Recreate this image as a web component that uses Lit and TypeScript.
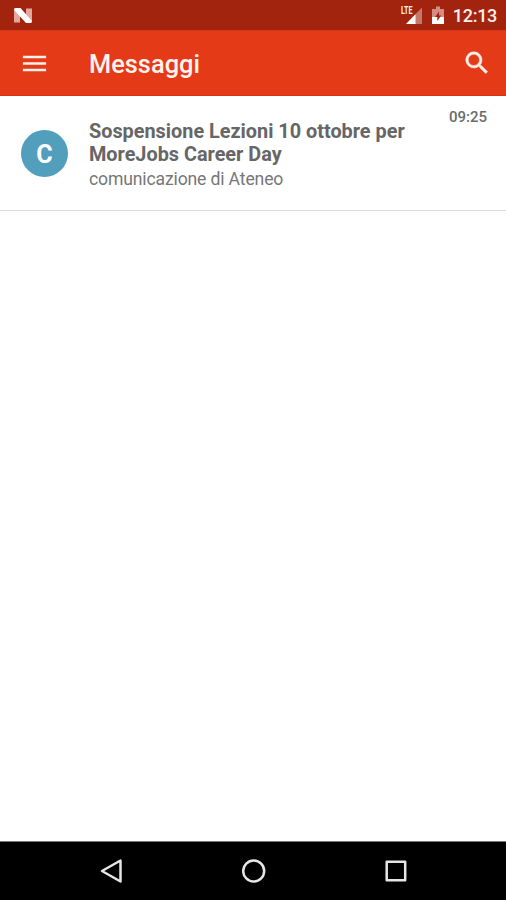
import { LitElement, html, css } from "lit";
import { customElement, property } from "lit/decorators.js";

@customElement("status-bar")
class StatusBar extends LitElement {
  static styles = css`
    :host {
      display: flex;
      align-items: center;
      height: 30px;
      padding: 0 9px 0 13px;
      box-sizing: border-box;
      background: #a2240e;
      color: #fff0ec;
    }
    .n { width: 20px; height: 17px; margin-top: 1px; }
    .gap { flex: 1; }
    .signal { width: 23px; height: 20px; margin-right: 9px; }
    .battery { width: 12px; height: 19px; margin: 1px 9px 0 0; }
    .clock { font-size: 18px; font-weight: 500; line-height: 30px; padding-top: 2px; letter-spacing: -0.3px; }
    .lte { font: 700 10px Roboto, sans-serif; fill: #fff0ec; }
  `;
  render() {
    return html`
      <svg class="n" viewBox="0 0 20 17">
        <path d="M1 1.500h6v14H1zM13 1.500h6v14h-6z" fill="#e3a79d" />
        <path d="M2 1h5.500L19 14l-1 2h-5L1 3z" fill="#fff" />
      </svg>
      <span class="gap"></span>
      <svg class="signal" viewBox="0 0 23 20">
        <path d="M22 2.500v16.500H6z" fill="#c5776a" />
        <path d="M15.500 9.200V19H6z" fill="#fff" />
        <text class="lte" x="1" y="9" textLength="11.500" lengthAdjust="spacingAndGlyphs">LTE</text>
      </svg>
      <svg class="battery" viewBox="0 0 12 19">
        <path d="M4 .5h4V3h4v8H0V3h4z" fill="#d28e83" />
        <path d="M0 11h12v7H0z" fill="#fff" />
        <path d="M7 5.500v4h2.200L5.300 15v-4H3z" fill="#a2240e" />
      </svg>
      <span class="clock">12:13</span>
    `;
  }
}

@customElement("app-bar")
class AppBar extends LitElement {
  @property() heading = "";
  static styles = css`
    :host {
      display: flex;
      align-items: center;
      height: 66px;
      padding: 0 14px 0 19px;
      box-sizing: border-box;
      background: #e53a17;
      color: #fff3ef;
      border-top: 1px solid #d5361a;
      border-bottom: 1px solid #dc2f12;
    }
    svg { width: 31px; height: 31px; fill: #fff0ec; }
    .search { width: 30px; height: 30px; margin-top: -1px; stroke: #fff0ec; stroke-width: 0.4; }
    .heading { flex: 1; margin-left: 39px; font-size: 25.4px; font-weight: 500; line-height: 30px; padding-top: 2px; }
  `;
  render() {
    return html`
      <svg viewBox="0 0 24 24"><path d="M3 18h18v-2H3v2zm0-5h18v-2H3v2zm0-7v2h18V6H3z" /></svg>
      <span class="heading">${this.heading}</span>
      <svg class="search" viewBox="0 0 24 24">
        <path d="M15.5 14h-.79l-.28-.27A6.471 6.471 0 0 0 16 9.5 6.5 6.5 0 1 0 9.5 16c1.61 0 3.09-.59 4.23-1.57l.27.28v.79l5 4.99L20.49 19l-4.99-5zm-6 0C7.01 14 5 11.99 5 9.5S7.01 5 9.5 5 14 7.01 14 9.5 11.99 14 9.5 14z" />
      </svg>
    `;
  }
}

@customElement("message-row")
class MessageRow extends LitElement {
  @property() initial = "";
  @property() subject = "";
  @property() summary = "";
  @property() time = "";
  static styles = css`
    :host {
      display: flex;
      height: 115px;
      box-sizing: border-box;
      padding: 0 19px 0 21px;
      border-bottom: 1px solid #d9d9d9;
    }
    .avatar {
      width: 47px;
      height: 47px;
      margin-top: 33.5px;
      border-radius: 50%;
      background: #519fbd;
      color: #fff;
      font-size: 25px;
      font-weight: 700;
      line-height: 49px;
      text-align: center;
    }
    .body { flex: 1; margin: 23.5px 0 0 21px; }
    .subject { width: 330px; font-size: 19.85px; font-weight: 700; line-height: 23px; color: #666; }
    .summary { font-size: 17.6px; letter-spacing: -0.15px; line-height: 22px; margin-top: 2px; color: #777; }
    .time { font-size: 15px; font-weight: 500; line-height: 18px; margin-top: 12px; color: #6b6b6b; }
  `;
  render() {
    return html`
      <div class="avatar">${this.initial}</div>
      <div class="body">
        <div class="subject">${this.subject}</div>
        <div class="summary">${this.summary}</div>
      </div>
      <div class="time">${this.time}</div>
    `;
  }
}

@customElement("nav-bar")
class NavBar extends LitElement {
  static styles = css`
    :host {
      display: flex;
      align-items: center;
      justify-content: center;
      gap: 118px;
      height: 59px;
      box-sizing: border-box;
      padding-left: 1px;
      background: #000;
      border-top: 1px solid #777;
    }
    svg { width: 24px; height: 24px; fill: none; stroke: #e6e6e6; stroke-width: 2.5; stroke-linejoin: round; }
  `;
  render() {
    return html`
      <svg viewBox="0 0 24 24"><path d="M20.500 1.500v21L2 12z" /></svg>
      <svg viewBox="0 0 24 24"><circle cx="11.700" cy="12" r="10.500" /></svg>
      <svg viewBox="0 0 24 24"><rect x="2.700" y="2.700" width="18.500" height="18.500" /></svg>
    `;
  }
}

@customElement("app-root")
class AppRoot extends LitElement {
  static styles = css`
    :host {
      display: flex;
      flex-direction: column;
      height: 900px;
      background: #fff;
      font-family: Roboto, sans-serif;
    }
    .list { flex: 1; }
  `;
  render() {
    return html`
      <status-bar></status-bar>
      <app-bar heading="Messaggi"></app-bar>
      <div class="list">
        <message-row
          initial="C"
          subject="Sospensione Lezioni 10 ottobre per MoreJobs Career Day"
          summary="comunicazione di Ateneo"
          time="09:25"
        ></message-row>
      </div>
      <nav-bar></nav-bar>
    `;
  }
}
